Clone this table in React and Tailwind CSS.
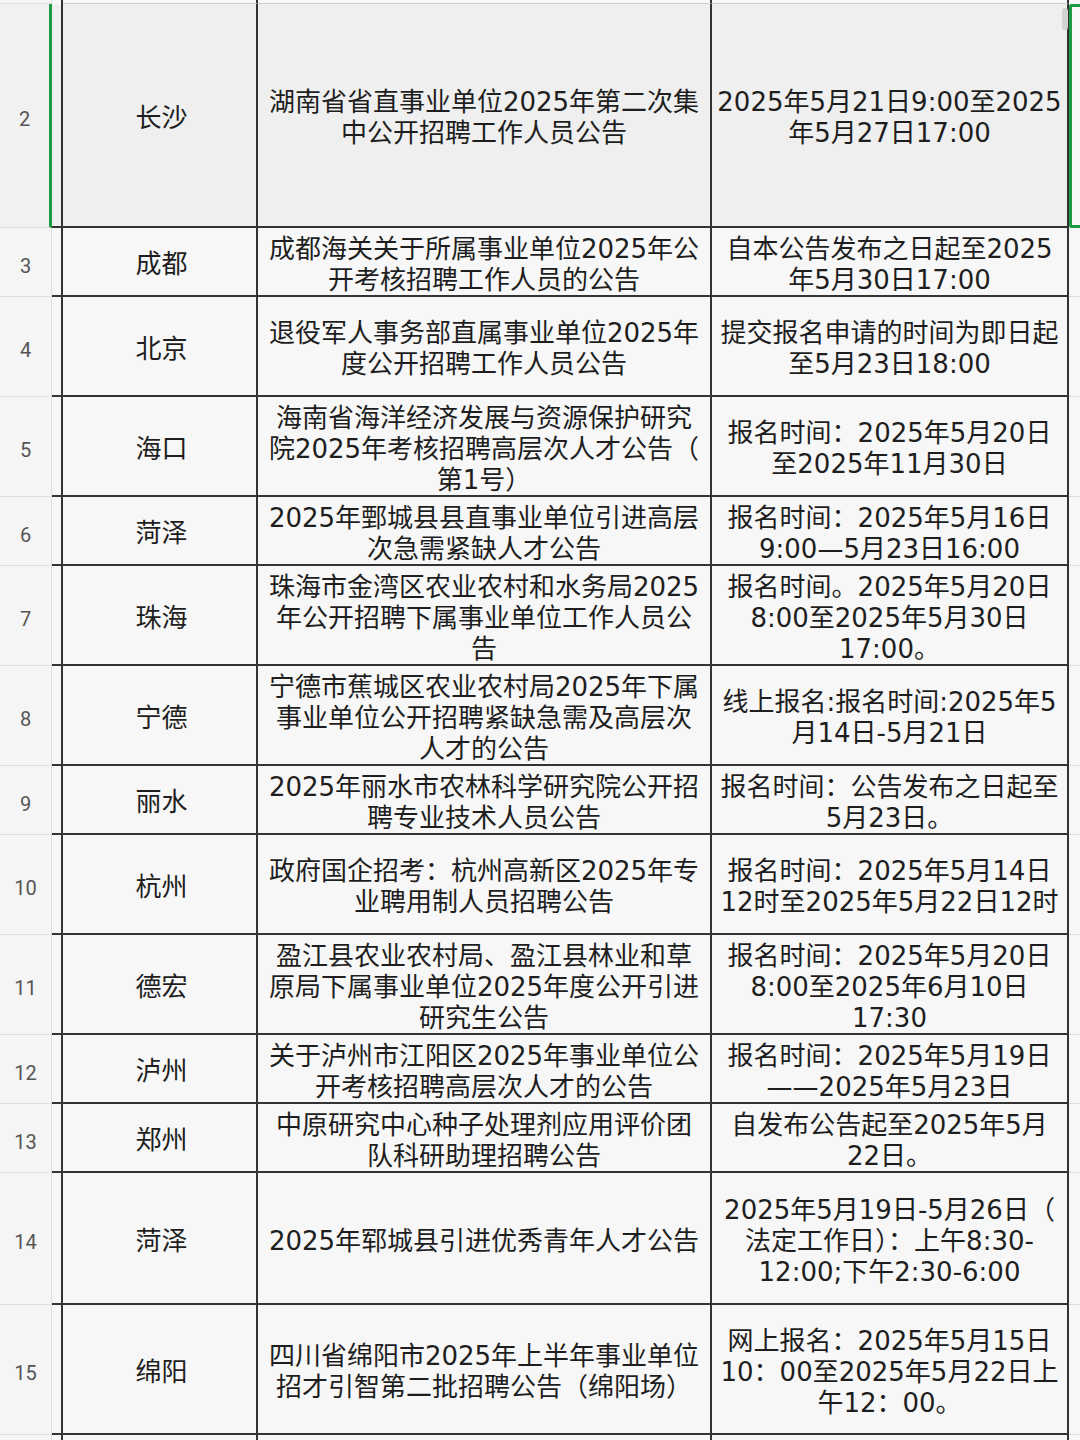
const rows = [
  { n: 2, h: 224, city: '长沙', title: ['湖南省省直事业单位2025年第二次集', '中公开招聘工作人员公告'], time: ['2025年5月21日9:00至2025', '年5月27日17:00'], sel: true },
  { n: 3, h: 69, city: '成都', title: ['成都海关关于所属事业单位2025年公', '开考核招聘工作人员的公告'], time: ['自本公告发布之日起至2025', '年5月30日17:00'] },
  { n: 4, h: 100, city: '北京', title: ['退役军人事务部直属事业单位2025年', '度公开招聘工作人员公告'], time: ['提交报名申请的时间为即日起', '至5月23日18:00'] },
  { n: 5, h: 100, city: '海口', title: ['海南省海洋经济发展与资源保护研究', '院2025年考核招聘高层次人才公告（', '第1号）'], time: ['报名时间：2025年5月20日', '至2025年11月30日'] },
  { n: 6, h: 69, city: '菏泽', title: ['2025年鄄城县县直事业单位引进高层', '次急需紧缺人才公告'], time: ['报名时间：2025年5月16日', '9:00—5月23日16:00'] },
  { n: 7, h: 100, city: '珠海', title: ['珠海市金湾区农业农村和水务局2025', '年公开招聘下属事业单位工作人员公', '告'], time: ['报名时间。2025年5月20日', '8:00至2025年5月30日', '17:00。'] },
  { n: 8, h: 100, city: '宁德', title: ['宁德市蕉城区农业农村局2025年下属', '事业单位公开招聘紧缺急需及高层次', '人才的公告'], time: ['线上报名:报名时间:2025年5', '月14日-5月21日'] },
  { n: 9, h: 69, city: '丽水', title: ['2025年丽水市农林科学研究院公开招', '聘专业技术人员公告'], time: ['报名时间：公告发布之日起至', '5月23日。'] },
  { n: 10, h: 100, city: '杭州', title: ['政府国企招考：杭州高新区2025年专', '业聘用制人员招聘公告'], time: ['报名时间：2025年5月14日', '12时至2025年5月22日12时'] },
  { n: 11, h: 100, city: '德宏', title: ['盈江县农业农村局、盈江县林业和草', '原局下属事业单位2025年度公开引进', '研究生公告'], time: ['报名时间：2025年5月20日', '8:00至2025年6月10日', '17:30'] },
  { n: 12, h: 69, city: '泸州', title: ['关于泸州市江阳区2025年事业单位公', '开考核招聘高层次人才的公告'], time: ['报名时间：2025年5月19日', '——2025年5月23日'] },
  { n: 13, h: 69, city: '郑州', title: ['中原研究中心种子处理剂应用评价团', '队科研助理招聘公告'], time: ['自发布公告起至2025年5月', '22日。'] },
  { n: 14, h: 132, city: '菏泽', title: ['2025年郓城县引进优秀青年人才公告'], time: ['2025年5月19日-5月26日（', '法定工作日）：上午8:30-', '12:00;下午2:30-6:00'] },
  { n: 15, h: 130, city: '绵阳', title: ['四川省绵阳市2025年上半年事业单位', '招才引智第二批招聘公告（绵阳场）'], time: ['网上报名：2025年5月15日', '10：00至2025年5月22日上', '午12：00。'] },
];

function Lines({ lines }) {
  return (
    <div className="text-center whitespace-nowrap leading-[31px]">
      {lines.map((l, i) => (
        <div key={i}>{l}</div>
      ))}
    </div>
  );
}

function Row({ r }) {
  const bg = r.sel ? 'bg-[#efefef]' : 'bg-[#f7f7f7]';
  return (
    <div className="flex" style={{ height: r.h }}>
      <div className={`w-[52px] shrink-0 flex items-center justify-center pt-[7px] border-b border-r border-[#dedede] text-[20px] text-[#555] font-['Roboto',sans-serif] ${r.sel ? 'bg-[#f1f1f1] border-r-[3px] border-r-[#1d9a45]' : 'bg-[#f5f5f5]'}`}>
        {r.n}
      </div>
      <div className={`w-[11px] shrink-0 border-b-2 border-b-[#333] border-r-2 border-r-[#333] ${bg}`} />
      <div className={`w-[195px] shrink-0 flex items-center justify-center pt-[6px] pl-[4px] border-b-2 border-r-2 border-[#333] ${bg}`}>
        {r.city}
      </div>
      <div className={`w-[454px] shrink-0 flex items-center justify-center pt-[6px] overflow-hidden border-b-2 border-r-2 border-[#333] ${bg}`}>
        <Lines lines={r.title} />
      </div>
      <div className={`w-[357px] shrink-0 flex items-center justify-center pt-[6px] overflow-hidden border-b-2 border-r-2 border-[#333] ${bg}`}>
        <Lines lines={r.time} />
      </div>
      <div className={`flex-1 ${r.sel ? 'border-[3px] border-r-0 border-[#1d9a45] rounded-l-[3px] bg-[#f7f7f7]' : 'border-b border-[#dedede] bg-[#f7f7f7]'}`} />
    </div>
  );
}

export default function App() {
  return (
    <div className="relative w-[1080px] h-[1440px] overflow-hidden bg-[#f7f7f7] text-[26px] text-[#1e1e1e] font-['DejaVu_Sans','Noto_Sans_CJK_SC',sans-serif]">
      <div className="flex h-[4px]">
        <div className="w-[52px] border-r border-b border-[#dedede] bg-[#f5f5f5]" />
        <div className="w-[11px] border-r-2 border-[#333]" />
        <div className="w-[195px] border-r-2 border-b border-[#333] border-b-[#cfcfcf]" />
        <div className="w-[454px] border-r-2 border-b border-[#333] border-b-[#cfcfcf]" />
        <div className="w-[357px] border-r-2 border-b border-[#333] border-b-[#cfcfcf]" />
        <div className="flex-1" />
      </div>
      {rows.map((r) => (
        <Row key={r.n} r={r} />
      ))}
      <div className="flex h-[10px]">
        <div className="w-[52px] border-r border-[#dedede] bg-[#f5f5f5]" />
        <div className="w-[11px] border-r-2 border-[#333]" />
        <div className="w-[195px] border-r-2 border-[#333]" />
        <div className="w-[454px] border-r-2 border-[#333]" />
        <div className="w-[357px] border-r-2 border-[#333]" />
        <div className="flex-1" />
      </div>
      <div className="absolute left-[1062px] top-[8px] w-[6px] h-[22px] rounded-full bg-[#d2d2d2]" />
    </div>
  );
}
